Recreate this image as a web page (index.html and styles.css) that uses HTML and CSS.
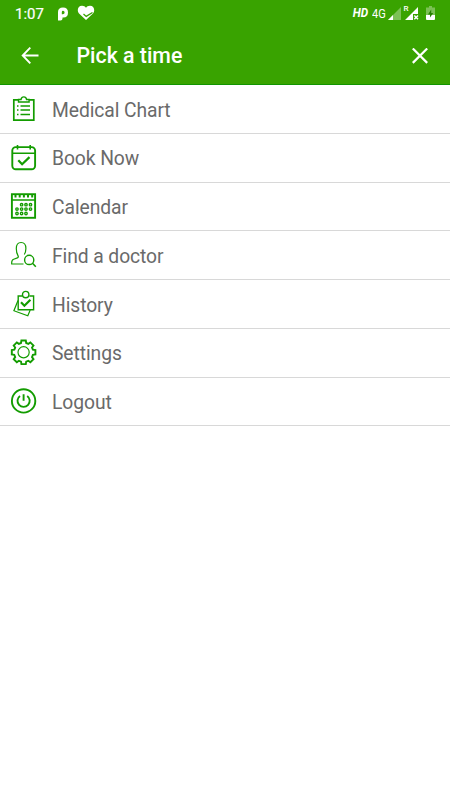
FILE: index.html
```html
<!DOCTYPE html>
<html lang="en">
<head>
<meta charset="utf-8">
<title>Pick a time</title>
<link rel="stylesheet" href="styles.css">
</head>
<body>
<header class="header">
  <div class="status">
    <span class="clock">1:07</span>
    <svg class="app-p" width="12" height="14" viewBox="0 0 12 14"><path fill="#fff" fill-rule="evenodd" d="M1 13.500V5Q1 .5 6 .5T11 5.500 6.500 10.500H5.500V11.500Q5.500 13.500 3.500 13.500ZM6 3.800Q4.800 3.800 4.800 5.200V7.300H6Q7.600 7.200 7.600 5.500T6 3.800Z"/></svg>
    <svg class="heart" width="18" height="16" viewBox="0 0 18 16"><path fill="#fff" d="M9 15 2 8.500C-.5 5.500 1 .7 5 .7 7 .7 8.200 1.500 9 2.700 9.800 1.500 11 .7 13 .7c4 0 5.500 4.800 3 7.800Z"/><path fill="none" stroke="#39a300" stroke-width="1.300" d="m6.500 9 2.700 2.400L15.500 7.500"/></svg>
    <span class="hd">HD</span>
    <span class="net">4G</span>
    <svg class="signal" width="13" height="13" viewBox="0 0 13 13"><path fill="#7cc155" d="M13 0v13H0Z"/><path fill="#fff" d="M5 8v5H0Z"/></svg>
    <svg class="roaming" width="15" height="15" viewBox="0 0 15 15"><path fill="#fff" d="M14 2v7H9v6H1Z"/><path stroke="#fff" stroke-width="1.500" d="m10.300 10.500 3.700 3.700m0-3.700L10.300 14.200"/><text class="r" x="-.5" y="6">R</text></svg>
    <svg class="battery" width="9" height="14" viewBox="0 0 9 14"><path fill="#7cc155" d="M3 0h3v1.500h3V9H0V1.500h3Z"/><path fill="#fff" d="M0 9h9v4q0 1-1 1H1q-1 0-1-1Z"/><path fill="#278000" d="M5.200 3.500 2 8.500h2v3L7.200 7h-2Z"/></svg>
  </div>
  <div class="bar">
    <svg class="back" width="18" height="18" viewBox="0 0 18 18" fill="none" stroke="#fff" stroke-width="1.900"><path d="M17.500 8.500H2M9.300.700 1.700 8.500l7.600 7.800"/></svg>
    <h1 class="title">Pick a time</h1>
    <svg class="close" width="16" height="16" viewBox="0 0 16 16" fill="none" stroke="#fff" stroke-width="2.200"><path d="m.8.500 14.400 14.400m0-14.400L.8 14.900"/></svg>
  </div>
</header>
<nav class="menu">
  <a class="item"><svg class="icon" viewBox="0 0 28 28"><path stroke-width="1.700" d="M8.500 4.900H3.800v20.300h20V4.900h-4.700"/><path stroke-width="1.400" d="M8.500 7V4.500H11Q11.500 1.900 13.800 1.900T16.600 4.500h2.500V7ZM7 11h1.500M7 15h1.500M7 19.500h1.500M10.500 11h9.500M10.500 15h9.500M10.500 19.500h9.500"/></svg><span>Medical Chart</span></a>
  <a class="item"><svg class="icon" viewBox="0 0 28 28"><rect x="2.300" y="3.100" width="22.800" height="22.200" rx="3.500" stroke-width="1.900"/><path stroke-width="1.600" d="M2.500 9.300h22.500M7.500 1v4.400M20.200 1v4.400"/><path stroke-width="2.200" d="m8.300 16.300 3.800 4 7.400-7.200"/></svg><span>Book Now</span></a>
  <a class="item"><svg class="icon" viewBox="0 0 28 28"><rect x="1.900" y="2.200" width="23.200" height="23.600" stroke-width="1.900"/><path stroke-width="1.500" d="M2 8h23"/><path stroke-width="2" d="M5.500 2v3.500M9.700 2v3.500M13.900 2v3.500M18 2v3.500M22.200 2v3.500"/><g stroke-width="1.400"><circle cx="11.600" cy="12.700" r="1.200"/><circle cx="16" cy="12.700" r="1.200"/><circle cx="20.500" cy="12.700" r="1.200"/><circle cx="7" cy="17.100" r="1.200"/><circle cx="11.600" cy="17.100" r="1.200"/><circle cx="16" cy="17.100" r="1.200"/><circle cx="20.500" cy="17.100" r="1.200"/><circle cx="7" cy="21.500" r="1.200"/><circle cx="11.600" cy="21.500" r="1.200"/><circle cx="16" cy="21.500" r="1.200"/></g></svg><span>Calendar</span></a>
  <a class="item"><svg class="icon" viewBox="0 0 28 28"><path stroke-width="1.200" d="M13.500 23H1.700q-.3-4 2-4.800l3.600-1.300q1.600-.7.700-2.300Q6.300 12 6.300 7.500q0-6 4.800-6t4.800 6q0 3.500-1.600 6"/><circle cx="19.200" cy="18.900" r="4.600" stroke-width="1.400"/><path stroke-width="1.500" d="m22.500 22.200 3.300 3.500"/></svg><span>Find a doctor</span></a>
  <a class="item"><svg class="icon" viewBox="0 0 28 28"><path stroke-width="1.400" d="M12.500 6H8.200v13.700h15.400V6h-4.200"/><circle cx="15.700" cy="4.600" r="3.200" stroke-width="1.400"/><path stroke-width="2.200" d="m11 12.300 3.400 3.500 6-6"/><path stroke-width="1.200" d="M8 10.500 3.900 20.700 17.800 25.700 20.200 20"/></svg><span>History</span></a>
  <a class="item"><svg class="icon" viewBox="0 0 28 28"><g transform="translate(13.600 13.300)"><path stroke-width="1.900" d="M-2.200-11.800H2.200L2.600-9.300 4.740-8.410 6.790-9.900 9.900-6.790 8.410-4.740 9.300-2.600 11.800-2.200V2.200L9.300 2.600 8.410 4.740 9.900 6.790 6.790 9.900 4.740 8.410 2.600 9.300 2.200 11.800H-2.200L-2.600 9.300-4.740 8.410-6.790 9.900-9.900 6.790-8.410 4.740-9.300 2.600-11.800 2.200V-2.200L-9.300-2.600-8.410-4.740-9.900-6.790-6.790-9.900-4.740-8.410-2.600-9.300Z"/><circle r="5.600" stroke-width="1.200"/></g></svg><span>Settings</span></a>
  <a class="item"><svg class="icon" viewBox="0 0 28 28"><circle cx="13.600" cy="13.900" r="11.700" stroke-width="1.900"/><path stroke-width="1.900" d="M10 8.900a6.100 6.100 0 1 0 7.200 0M13.600 7.300v6.500"/></svg><span>Logout</span></a>
</nav>
</body>
</html>
```

FILE: styles.css
```css
* { box-sizing: border-box; }
body { margin: 0; height: 800px; background: #fff; font-family: Roboto, "Liberation Sans", sans-serif; }
.header { height: 85px; background: #39a300; border-bottom: 1px solid #119500; color: #fff; }
.status { height: 27px; padding: 0 15px; display: flex; align-items: center; }
.clock { width: 42px; font-size: 15px; font-weight: 400; line-height: 27px; padding-top: 1px; -webkit-text-stroke: .2px #fff; }
.heart { margin-left: 8px; margin-top: -2px; }
.hd { margin-left: auto; font-size: 13px; font-weight: 700; font-style: italic; transform: scaleX(.9); transform-origin: right; margin-top: -2px; }
.net { margin-left: 4px; width: 14px; font-size: 13.500px; transform: scaleX(.82); transform-origin: left; margin-top: -2px; }
.signal { margin-left: 2px; margin-top: -1px; }
.roaming { margin-left: 3px; margin-top: -3px; overflow: visible; }
.r { fill: #fff; font-size: 8px; font-weight: 500; }
.battery { margin-left: 7px; margin-top: -1px; }
.bar { height: 57px; display: flex; align-items: center; padding: 0 22px 0 21px; }
.title { margin: 0 0 0 37.500px; padding-top: 1px; font-size: 21.300px; line-height: 24px; font-weight: 500; }
.close { margin-left: auto; }
.item { height: 48.750px; display: flex; align-items: center; padding-left: 10px; border-bottom: 1px solid #d8d8d8; color: #6a6a6a; font-size: 19.300px; letter-spacing: -.08px; font-weight: 400; }
.item span { padding-top: 2.500px; }
.icon { width: 28px; height: 28px; flex: none; margin-right: 14px; fill: none; stroke: #139c00; }
```
